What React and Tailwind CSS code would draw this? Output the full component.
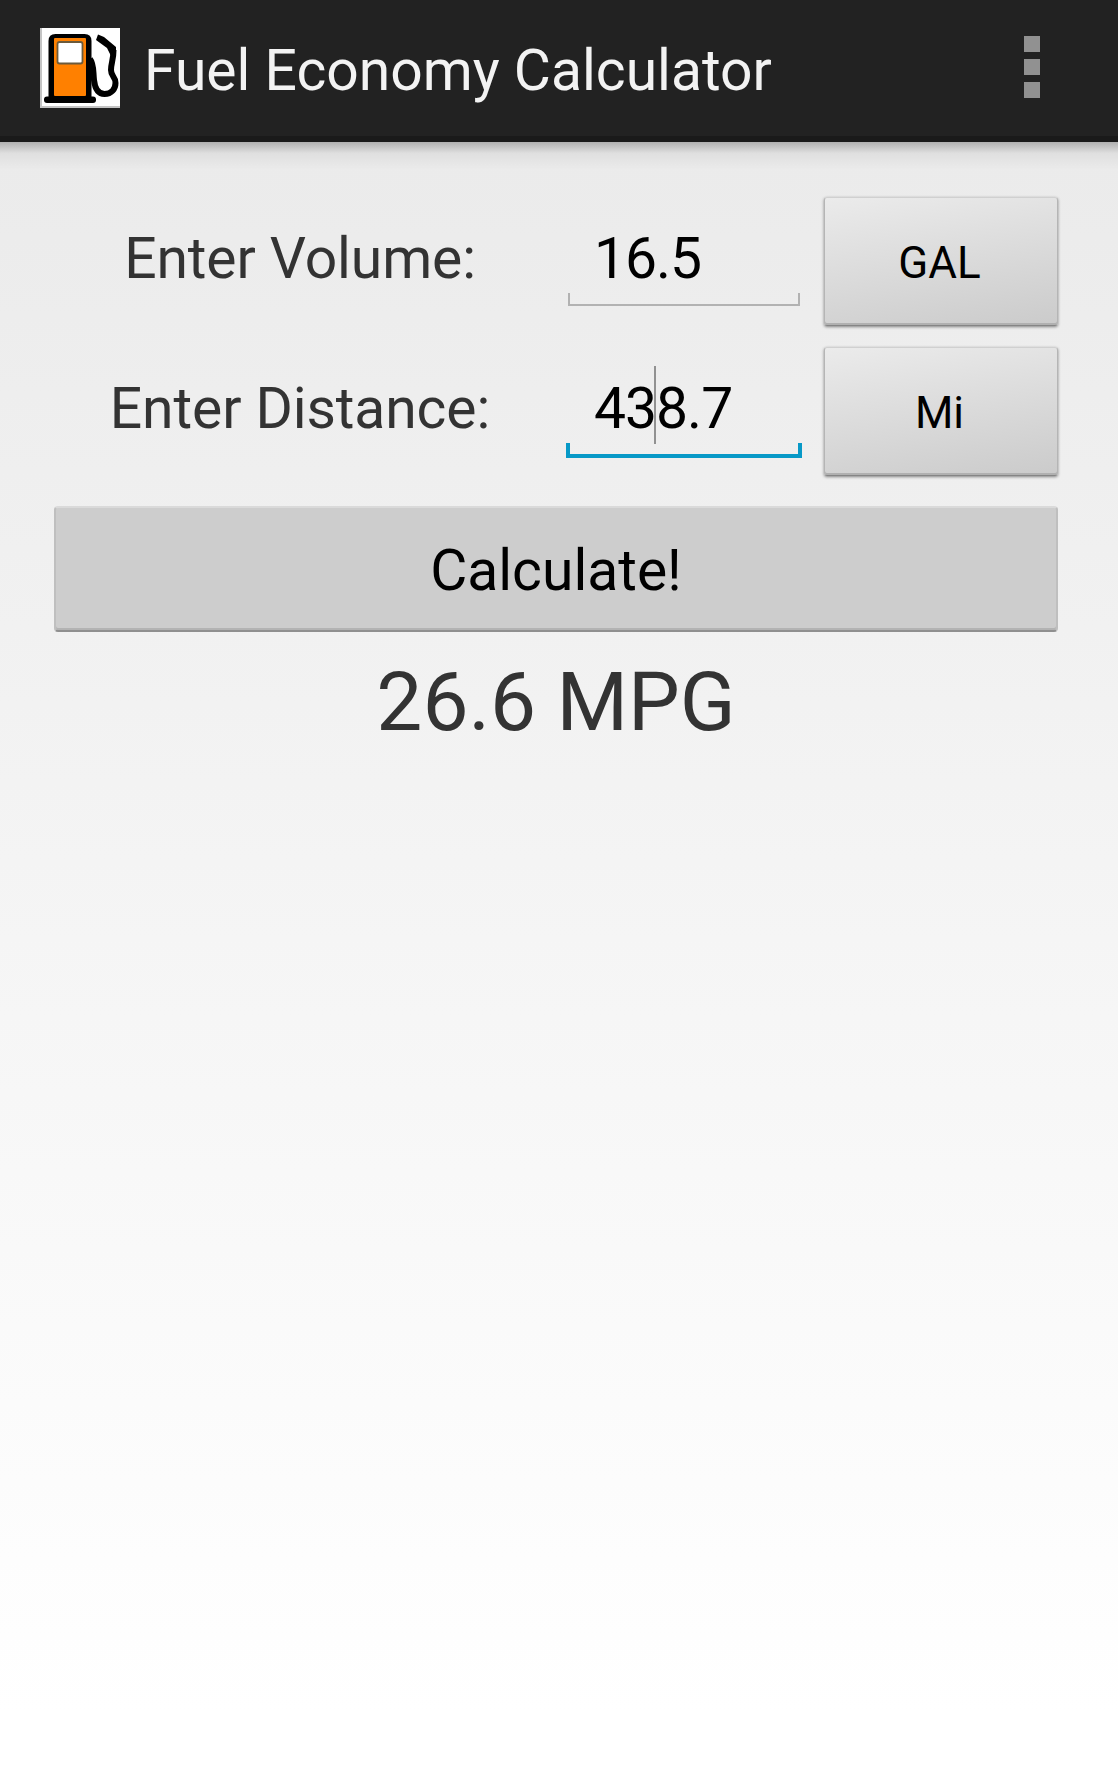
import React, { useState } from 'react';
import clsx from 'clsx';

function PumpIcon() {
  return (
    <svg viewBox="0 0 80 80" className="mt-px h-20 w-20 shrink-0">
      <rect width="80" height="80" fill="#fff" />
      <path d="M1 0V79H80" fill="none" stroke="#c4c4c4" strokeWidth="2" />
      <path d="M8.500 72V13Q8.500 6 15.500 6H44.500Q51.500 6 51.500 13V72Z" fill="#000" />
      <rect x="14" y="10" width="32" height="58" rx="1" fill="#ff8000" />
      <rect x="17.500" y="14" width="25" height="21.500" rx="2" fill="#fff" stroke="#6b5a3c" strokeWidth="1.800" />
      <rect x="4" y="68.500" width="52" height="6.500" rx="3" fill="#000" />
      <path
        d="M50 31C54 36 53 43 54 52C55 61 58 66 64.500 66C71.500 66 75.500 61 75.500 55C75.500 48 71 49 71 42C71 35 73.500 32 73.500 22"
        fill="none"
        stroke="#000"
        strokeWidth="6"
      />
      <path d="M58 6.500L64 9L76 19V29L70.500 27L67 20L56 12Z" fill="#000" />
    </svg>
  );
}

function OverflowMenu() {
  return (
    <button type="button" aria-label="More options" className="flex flex-col gap-[7px]">
      <span className="h-4 w-4 bg-[#919191]" />
      <span className="h-4 w-4 bg-[#919191]" />
      <span className="h-4 w-4 bg-[#919191]" />
    </button>
  );
}

function Field({ label, value, onChange, unit, focused }) {
  return (
    <div className="flex h-[130px]">
      <label className="flex w-[492px] items-center justify-center pb-[6px] text-[57px] leading-none tracking-[-0.1px] text-[#333]">
        {label}
      </label>

      <div className="relative ml-5 w-[236px]">
        <input
          value={value}
          onChange={(e) => onChange(e.target.value)}
          className="h-[124px] w-full bg-transparent pl-7 text-[57px] tracking-[-1px] text-black outline-none"
        />
        <div
          className={clsx(
            'pointer-events-none absolute',
            focused
              ? 'inset-x-0 top-[97px] h-[15px] border-x-4 border-b-4 border-[#0799c7]'
              : 'inset-x-[2px] top-[97px] h-[13px] border-x-2 border-b-2 border-[#b2b2b2]'
          )}
        />
        {focused && <div className="absolute left-[88px] top-5 h-[78px] w-[2px] bg-[#919191]" />}
      </div>

      <button
        type="button"
        className="ml-[22px] mt-px w-[234px] rounded-[3px] border border-x-[#b5b5b5] border-t-[#d0d0d0] border-b-[#858585] bg-linear-170 from-[#ebebeb] to-[#cbcbcb] pr-[3px] pt-[3px] text-[44px] leading-none text-black shadow-[inset_0_-2px_0_#b0b0b0,0_1px_3px_rgba(0,0,0,0.45)]"
      >
        {unit}
      </button>
    </div>
  );
}

export default function App() {
  const [volume, setVolume] = useState('16.5');
  const [distance, setDistance] = useState('438.7');

  return (
    <div className="flex h-[1766px] w-[1118px] flex-col bg-linear-to-b from-[#e9e9e9] to-white to-97% font-['Roboto',sans-serif]">
      <header className="flex h-[142px] shrink-0 items-start border-b-[6px] border-[#1a1a1a] bg-[#222] pl-10 pr-[78px]">
        <div className="flex h-[134px] w-full items-center">
          <PumpIcon />
          <h1 className="ml-6 flex-1 whitespace-nowrap pt-[6px] text-[57px] leading-none text-[#f3f3f3]">
            Fuel Economy Calculator
          </h1>
          <OverflowMenu />
        </div>
      </header>
      <div className="h-7 shrink-0 bg-linear-to-b from-black/25 via-black/5 via-40% to-transparent" />

      <main className="flex flex-col pl-[54px] pr-[60px] pt-[26px]">
        <div className="flex flex-col gap-5">
          <Field label="Enter Volume:" value={volume} onChange={setVolume} unit="GAL" />
          <Field label="Enter Distance:" value={distance} onChange={setDistance} unit="Mi" focused />
        </div>

        <button
          type="button"
          className="mt-[30px] h-[126px] rounded-[4px] border-x-2 border-t-2 border-b-2 border-x-[#bfbfbf] border-t-[#dadada] border-b-[#8f8f8f] bg-[#cdcdcd] pt-[3px] text-[57px] leading-none text-black shadow-[inset_0_-2px_0_#b3b3b3]"
        >
          Calculate!
        </button>

        <p className="mt-7 text-center text-[82px] leading-[84px] text-[#333]">26.6 MPG</p>
      </main>
    </div>
  );
}
